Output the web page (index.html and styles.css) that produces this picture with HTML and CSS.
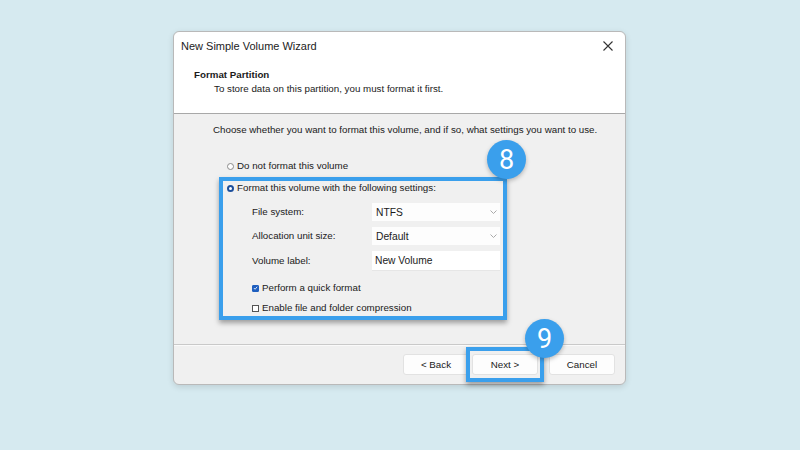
FILE: index.html
```html
<!DOCTYPE html>
<html>
<head>
<meta charset="utf-8">
<link rel="stylesheet" href="styles.css">
</head>
<body>
<div class="dialog">
  <div class="top">
    <div class="titlebar">
      <span class="title">New Simple Volume Wizard</span>
      <svg class="close" width="10" height="10" viewBox="0 0 10 10"><path d="M0.5 0.5 L9.5 9.5 M9.5 0.5 L0.5 9.5" stroke="#333" stroke-width="1.1" fill="none"/></svg>
    </div>
    <div class="header">
      <div class="h-title">Format Partition</div>
      <div class="h-sub">To store data on this partition, you must format it first.</div>
    </div>
  </div>
  <div class="body">
    <p class="intro">Choose whether you want to format this volume, and if so, what settings you want to use.</p>
    <div class="opt opt1"><span class="radio"></span>Do not format this volume</div>
    <div class="group">
      <span class="badge badge8">8</span>
      <div class="opt"><span class="radio on"></span>Format this volume with the following settings:</div>
      <div class="fields">
        <span class="lbl">File system:</span>
        <div class="combo">NTFS<svg class="chev" width="7" height="4" viewBox="0 0 7 4"><path d="M0.5 0.5 L3.5 3.5 L6.5 0.5" stroke="#aaa" fill="none"/></svg></div>
        <span class="lbl">Allocation unit size:</span>
        <div class="combo">Default<svg class="chev" width="7" height="4" viewBox="0 0 7 4"><path d="M0.5 0.5 L3.5 3.5 L6.5 0.5" stroke="#aaa" fill="none"/></svg></div>
        <span class="lbl">Volume label:</span>
        <div class="input">New Volume</div>
      </div>
      <div class="check check1"><span class="box on"><svg width="6" height="6" viewBox="0 0 6 6"><path d="M1 3 L2.5 4.5 L5 1.5" stroke="#fff" stroke-width="1" fill="none"/></svg></span>Perform a quick format</div>
      <div class="check check2"><span class="box"></span>Enable file and folder compression</div>
    </div>
  </div>
  <div class="footer">
    <button class="btn back">&lt; Back</button>
    <span class="hl"><span class="badge badge9">9</span><button class="btn">Next &gt;</button></span>
    <button class="btn cancel">Cancel</button>
  </div>
</div>
</body>
</html>
```
FILE: styles.css
```css
* { box-sizing: border-box; }
html, body { margin: 0; padding: 0; }
body {
  width: 800px;
  height: 450px;
  background: #d6eaf0;
  font-family: "Liberation Sans", Arial, sans-serif;
  font-size: 9.75px;
  color: #1a1a1a;
  overflow: hidden;
}
.dialog {
  width: 453px;
  height: 354px;
  margin: 31px 0 0 173px;
  border: 1px solid #b9b9b9;
  border-radius: 6px;
  background: #f0f0f0;
  box-shadow: 0 2px 6px rgba(0,0,0,0.12);
  display: flex;
  flex-direction: column;
}
.top {
  background: #fff;
  height: 82px;
  border-bottom: 1px solid #a8a8a8;
  border-radius: 6px 6px 0 0;
}
.titlebar {
  height: 28px;
  display: flex;
  align-items: center;
  justify-content: space-between;
  padding: 0 12px 0 7px;
}
.title { font-size: 11px; color: #222; }
.close { display: block; }
.header { padding: 8px 0 0 20px; }
.h-title { font-weight: bold; font-size: 9.75px; line-height: 14px; }
.h-sub { padding-left: 20px; line-height: 14px; }
.body {
  height: 231px;
  border-bottom: 1px solid #c9c9c9;
  box-shadow: 0 1px 0 #fafafa;
  padding: 10px 0 0 39px;
  position: relative;
}
.intro { margin: 0; line-height: 12px; }
.opt { display: flex; align-items: center; line-height: 12px; }
.opt1 { margin: 24px 0 0 14px; }
.radio {
  width: 7px; height: 7px;
  border: 1px solid #8a8a8a;
  border-radius: 50%;
  margin-right: 3px;
  background: #fff;
}
.radio.on { border: 2px solid #1c4f9c; background: #fff; }
.group {
  position: relative;
  width: 288px;
  margin: 5px 0 0 6px;
  border: 4px solid #3a9fec;
  padding: 1px 3px 2px 4px;
  box-shadow: 0 3px 5px rgba(0,0,0,0.35);
}
.fields {
  display: grid;
  grid-template-columns: 120px 128px;
  row-gap: 6px;
  align-items: center;
  margin: 9px 0 0 25px;
}
.lbl { line-height: 12px; }
.combo, .input {
  height: 18px;
  background: #fdfdfd;
  display: flex;
  align-items: center;
  justify-content: space-between;
  padding: 0 3px 0 4px;
  font-size: 10.25px;
}
.input { height: 20px; background: #fff; padding-left: 3px; border-bottom: 1px solid #e6e6e6; }
.chev { display: block; }
.check { display: flex; align-items: center; line-height: 12px; margin-left: 25px; }
.check1 { margin-top: 11px; }
.check2 { margin-top: 8px; }
.box {
  width: 7px; height: 7px;
  border: 1px solid #555;
  margin-right: 3px;
  display: flex; align-items: center; justify-content: center;
  background: #fff;
}
.box.on { background: #1f5fbf; border-color: #1f5fbf; border-radius: 1px; }
.box svg { display: block; }
.badge {
  position: absolute;
  width: 39px; height: 39px;
  border-radius: 50%;
  background: #3a9fec;
  color: #fff;
  font-family: Roboto, "Liberation Sans", sans-serif;
  font-size: 27px;
  display: flex; align-items: center; justify-content: center;
  box-shadow: 0 2px 4px rgba(0,0,0,0.25);
  z-index: 2;
}
.badge8 { left: 264px; top: -41px; }
.footer {
  flex: 1;
  display: flex;
  align-items: center;
  justify-content: flex-end;
  padding: 0 10px 0 0;
}
.btn {
  width: 66px;
  height: 21px;
  background: #fdfdfd;
  border: 1px solid #e2e2e2;
  border-radius: 3px;
  font-family: "Liberation Sans", Arial, sans-serif;
  font-size: 9.75px;
  color: #1a1a1a;
  padding: 0;
}
.back { margin-right: 3px; }
.cancel { margin-left: 11px; }
.hl {
  position: relative;
  display: flex;
  border: 4px solid #3a9fec;
  padding: 3px 2px;
  margin: 0 -6px;
  box-shadow: 0 3px 5px rgba(0,0,0,0.35);
}
.badge9 { left: 55px; top: -32px; }
```
